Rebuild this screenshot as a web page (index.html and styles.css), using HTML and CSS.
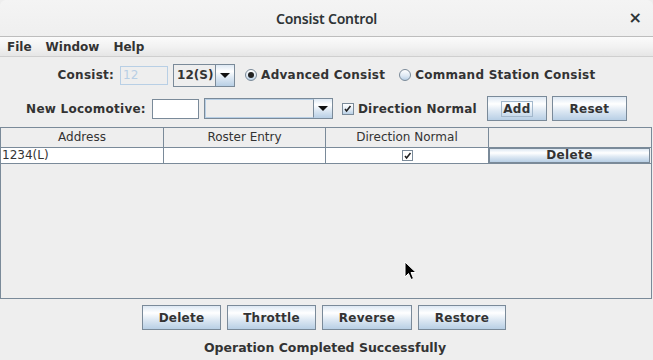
FILE: index.html
```html
<!DOCTYPE html>
<html>
<head>
<meta charset="utf-8">
<link rel="stylesheet" href="styles.css">
</head>
<body>
<div class="window">
  <div class="titlebar">
    <span class="title">Consist Control</span>
    <span class="close">×</span>
  </div>
  <div class="menubar">
    <span class="menu">File</span>
    <span class="menu">Window</span>
    <span class="menu">Help</span>
  </div>
  <div class="content">
    <div class="row row1">
      <span class="label">Consist:</span>
      <span class="field disabled">12</span>
      <span class="combo combo-small"><span class="combo-value">12(S)</span><span class="arrow"><span class="tri"></span></span></span>
      <span class="radio-item first"><span class="radio on"><span class="dot"></span></span>Advanced Consist</span>
      <span class="radio-item second"><span class="radio"></span>Command Station Consist</span>
    </div>
    <div class="row row2">
      <span class="label">New Locomotive:</span>
      <span class="field loco"></span>
      <span class="combo combo-wide"><span class="combo-value"></span><span class="arrow"><span class="tri"></span></span></span>
      <span class="check-item"><span class="check"><svg width="9" height="9" viewBox="0 0 9 9"><path d="M2 5 L3.6 7 L7.5 2" fill="none" stroke="#222" stroke-width="1.6"/></svg></span>Direction Normal</span>
      <span class="btn add"><span class="focus">Add</span></span>
      <span class="btn reset">Reset</span>
    </div>
    <div class="table">
      <div class="thead">
        <div class="th">Address</div>
        <div class="th">Roster Entry</div>
        <div class="th">Direction Normal</div>
        <div class="th"></div>
      </div>
      <div class="tr">
        <div class="td left">1234(L)</div>
        <div class="td"></div>
        <div class="td center"><span class="check small"><svg width="9" height="9" viewBox="0 0 9 9"><path d="M2 5 L3.6 7 L7.5 2" fill="none" stroke="#222" stroke-width="1.6"/></svg></span></div>
        <div class="td btncell"><span class="cellbtn">Delete</span></div>
      </div>
    </div>
    <div class="buttons">
      <span class="btn b-delete">Delete</span>
      <span class="btn b-throttle">Throttle</span>
      <span class="btn b-reverse">Reverse</span>
      <span class="btn b-restore">Restore</span>
    </div>
    <div class="status">Operation Completed Successfully</div>
  </div>
  <svg class="cursor" width="13" height="20" viewBox="0 0 13 20"><path d="M1 1 L1 16 L4.5 12.5 L7 18.5 L9.5 17.5 L7 11.5 L12 11.5 Z" fill="#000" stroke="#fff" stroke-width="1"/></svg>
</div>
</body>
</html>
```

FILE: styles.css
```css
* { box-sizing: border-box; }
html, body { margin: 0; padding: 0; }
body {
  width: 653px;
  height: 360px;
  overflow: hidden;
  background: #eeeeee;
  font-family: "DejaVu Sans", sans-serif;
  color: #333333;
}
.window {
  position: relative;
  width: 653px;
  height: 360px;
  background: #eeeeee;
}
.titlebar {
  height: 37px;
  background: linear-gradient(#f4f4f4, #efefef);
  border-bottom: 1px solid #bdbdbd;
  border-radius: 6px 6px 0 0;
  display: flex;
  align-items: center;
  justify-content: center;
  position: relative;
}
.title {
  font-family: "Noto Sans", sans-serif;
  font-size: 14px;
  font-weight: 600;
  color: #2e3436;
  letter-spacing: -0.2px;
}
.close {
  position: absolute;
  right: 11px;
  top: 8px;
  font-family: "DejaVu Sans", sans-serif;
  font-size: 16px;
  font-weight: bold;
  color: #2e3436;
}
.menubar {
  height: 20px;
  background: linear-gradient(#fbfbfb, #f2f2f2 50%, #e6e6e6);
  border-bottom: 1px solid #cfcfcf;
  display: flex;
  align-items: center;
  padding-left: 7px;
  gap: 14px;
}
.menu {
  font-size: 12px;
  font-weight: bold;
  color: #333;
}
.content {
  display: flex;
  flex-direction: column;
}
.row {
  display: flex;
  align-items: center;
  justify-content: center;
  font-size: 12px;
  letter-spacing: 0.25px;
  font-weight: bold;
}
.row1 { height: 24px; margin-top: 6px; }
.row2 { height: 25px; margin-top: 9px; }
.label { color: #333; }
.field {
  display: inline-flex;
  align-items: center;
  width: 48px;
  height: 19px;
  border: 1px solid #7a8a99;
  background: #fff;
  font-weight: normal;
  padding-left: 2px;
  font-size: 12px;
  margin-left: 6px;
  letter-spacing: 0;
}
.field.disabled {
  border-color: #b8cfe5;
  background: #eeeeee;
  color: #b8cfe5;
}
.field.loco { height: 20px; width: 47px; }
.combo {
  display: inline-flex;
  height: 23px;
  border: 1px solid #7a8a99;
  background: #eeeeee;
  margin-left: 5px;
}
.combo-small { width: 62px; }
.combo-wide { width: 129px; height: 21px; }
.combo-value {
  flex: 1;
  display: flex;
  align-items: center;
  padding-left: 3px;
  color: #333;
  border-right: 1px solid #7a8a99;
  letter-spacing: 0;
}
.combo-wide .combo-value { border: 1px solid #b8cfe5; border-right: 1px solid #7a8a99; }
.arrow {
  width: 18px;
  display: flex;
  align-items: center;
  justify-content: center;
  background: linear-gradient(#dde8f3, #ffffff 30%, #dde8f3 60%, #b8cfe5);
}
.tri {
  width: 0; height: 0;
  border-left: 5px solid transparent;
  border-right: 5px solid transparent;
  border-top: 5px solid #111;
}
.radio-item, .check-item {
  display: inline-flex;
  align-items: center;
  gap: 4px;
  color: #333;
}
.radio-item.first { margin-left: 10px; }
.radio-item.second { margin-left: 14px; }
.radio {
  width: 12px; height: 12px;
  border-radius: 50%;
  border: 1px solid #7a8a99;
  background: linear-gradient(#ffffff, #dde8f3 60%, #b8cfe5);
  display: inline-flex;
  align-items: center;
  justify-content: center;
}
.radio .dot {
  width: 6px; height: 6px;
  border-radius: 50%;
  background: #222;
}
.check-item { margin-left: 9px; gap: 4px; }
.check {
  width: 12px; height: 12px;
  border: 1px solid #7a8a99;
  background: linear-gradient(#ffffff, #dde8f3 60%, #b8cfe5);
  display: inline-flex;
  align-items: center;
  justify-content: center;
}
.btn {
  display: inline-flex;
  align-items: center;
  justify-content: center;
  height: 25px;
  border: 1px solid #7a8a99;
  background: linear-gradient(#dde8f3, #ffffff 30%, #dde8f3 60%, #b8cfe5);
  font-size: 12px;
  letter-spacing: 0.25px;
  font-weight: bold;
  color: #333;
}
.add { width: 60px; margin-left: 10px; }
.reset { width: 75px; margin-left: 5px; }
.focus {
  border: 1px solid #a3b8cc;
  padding: 0 1px;
  line-height: 14px;
}
.table {
  margin: 6px 1px 0 0;
  height: 172px;
  border: 1px solid #7a8a99;
  background: #eeeeee;
  display: flex;
  flex-direction: column;
}
.thead, .tr {
  display: grid;
  grid-template-columns: 163px 162px 163px 1fr;
}
.thead { height: 20px; }
.th {
  font-size: 12px;
  text-align: center;
  line-height: 19px;
  border-right: 1px solid #7a8a99;
  border-bottom: 1px solid #7a8a99;
  color: #333;
  background: #eeeeee;
}
.th:last-child { border-right: none; }
.tr { height: 16px; }
.td {
  background: #fff;
  border-right: 1px solid #7a8a99;
  border-bottom: 1px solid #7a8a99;
  font-size: 12px;
  line-height: 15px;
  color: #333;
}
.td.left { padding-left: 1px; }
.td.center { display: flex; justify-content: center; align-items: center; }
.td.btncell { border-right: none; padding: 0 1px 0 0; background: #eeeeee; }
.check.small { width: 11px; height: 11px; background: #fff; }
.cellbtn {
  display: flex;
  align-items: center;
  justify-content: center;
  height: 15px;
  border: 1px solid #7a8a99;
  background: linear-gradient(#dde8f3, #ffffff 30%, #dde8f3 60%, #b8cfe5);
  font-size: 12px;
  letter-spacing: 0.4px;
  font-weight: bold;
  color: #333;
}
.buttons {
  display: flex;
  justify-content: center;
  gap: 6px;
  margin-top: 6px;
  margin-left: -5px;
}
.b-delete { width: 79px; }
.b-throttle { width: 89px; }
.b-reverse { width: 90px; }
.b-restore { width: 88px; }
.status {
  text-align: center;
  font-size: 12.5px;
  font-weight: bold;
  margin-top: 10px;
  margin-left: -3px;
}
.cursor {
  position: absolute;
  left: 404px;
  top: 261px;
}
```
